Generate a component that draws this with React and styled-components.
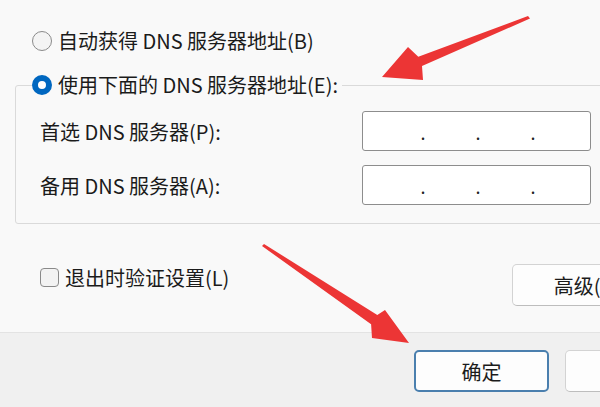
import styled, { createGlobalStyle } from "styled-components";

const Global = createGlobalStyle`
  html, body {
    margin: 0;
    padding: 0;
    background: #f9f9f9;
  }
  body {
    font-family: "Noto Sans CJK SC", "Noto Sans", sans-serif;
    color: #1b1b1b;
  }
`;

const Window = styled.div`
  position: relative;
  width: 600px;
  height: 407px;
  overflow: hidden;
  display: flex;
  flex-direction: column;
  font-size: 20px;
`;

const Main = styled.div`
  height: 333px;
  flex: 0 0 333px;
  box-sizing: border-box;
  padding-top: 30px;
  background: #f9f9f9;
  border-bottom: 1px solid #e3e3e3;
  display: flex;
  flex-direction: column;
`;

const Choice = styled.label`
  display: flex;
  align-items: center;
  gap: 6px;
  height: 22px;
  line-height: 22px;
  margin-left: ${(p) => p.$indent ?? 32}px;
  white-space: nowrap;
`;

const Radio = styled.span`
  box-sizing: border-box;
  flex: 0 0 20px;
  width: 20px;
  height: 20px;
  border-radius: 50%;
  border: ${(p) => (p.$checked ? "6px solid #0067c0" : "1.5px solid #8a8a8a")};
  background: ${(p) => (p.$checked ? "#ffffff" : "#f4f4f4")};
`;

const GroupBox = styled.div`
  margin: 33px -60px 0 15px;
  border: 1px solid #dadada;
  border-radius: 3px;
  padding: 0 0 18px 24px;
  display: flex;
  flex-direction: column;
  gap: 14px;
`;

const Legend = styled.div`
  align-self: flex-start;
  margin: -13px 0 0 -8px;
  height: 24px;
  display: flex;
  align-items: center;
  background: #f9f9f9;
  padding-right: 4px;
`;

const FieldRow = styled.div`
  display: flex;
  align-items: center;
  height: 40px;
`;

const FieldLabel = styled.span`
  flex: 0 0 322px;
  white-space: nowrap;
`;

const IpField = styled.div`
  box-sizing: border-box;
  flex: 0 0 229px;
  height: 40px;
  border: 1px solid #8d8d8d;
  border-radius: 3px;
  background: #ffffff;
  display: flex;
  align-items: center;
  padding-left: 7.5px;
`;

const Octet = styled.span`
  flex: 0 0 50px;
`;

const Dot = styled.span`
  flex: 0 0 5px;
  text-align: center;
  font-size: 18px;
  line-height: 18px;
  margin-top: 2px;
  color: #222;
`;

const OptionsRow = styled.div`
  display: flex;
  align-items: flex-start;
  margin-top: 40px;
  padding-left: 40px;
`;

const CheckLabel = styled.label`
  display: flex;
  align-items: center;
  gap: 6px;
  margin-top: 3px;
  height: 20px;
  flex: 0 0 472px;
  white-space: nowrap;
`;

const Checkbox = styled.span`
  box-sizing: border-box;
  flex: 0 0 19px;
  width: 19px;
  height: 19px;
  border: 1.5px solid #8a8a8a;
  border-radius: 4px;
  background: #f3f3f3;
`;

const Button = styled.button`
  box-sizing: border-box;
  flex: 0 0 ${(p) => p.$width}px;
  height: 42px;
  border-radius: 5px;
  font: inherit;
  color: #1b1b1b;
  background: #fdfdfd;
  border: ${(p) => (p.$primary ? "2px solid #4a7fae" : "1px solid #d3d3d3")};
  border-bottom-color: ${(p) => (p.$primary ? "#4a7fae" : "#bdbdbd")};
  white-space: nowrap;
  padding: 0;
`;

const Footer = styled.div`
  flex: 1;
  background: #f0f0f0;
  display: flex;
  align-items: flex-start;
  padding: 17px 0 0 414px;
  gap: 16px;
`;

const Overlay = styled.svg`
  position: absolute;
  left: 0;
  top: 0;
  pointer-events: none;
`;

const servers = [
  { label: "首选 DNS 服务器(P):" },
  { label: "备用 DNS 服务器(A):" },
];

function IpInput() {
  return (
    <IpField>
      <Octet />
      <Dot>.</Dot>
      <Octet />
      <Dot>.</Dot>
      <Octet />
      <Dot>.</Dot>
      <Octet />
    </IpField>
  );
}

export default function App() {
  return (
    <Window>
      <Global />
      <Main>
        <Choice>
          <Radio />
          自动获得 DNS 服务器地址(B)
        </Choice>
        <GroupBox>
          <Legend>
            <Choice $indent={0}>
              <Radio $checked />
              使用下面的 DNS 服务器地址(E):
            </Choice>
          </Legend>
          {servers.map((s) => (
            <FieldRow key={s.label}>
              <FieldLabel>{s.label}</FieldLabel>
              <IpInput />
            </FieldRow>
          ))}
        </GroupBox>
        <OptionsRow>
          <CheckLabel>
            <Checkbox />
            退出时验证设置(L)
          </CheckLabel>
          <Button $width={165}>高级(V)...</Button>
        </OptionsRow>
      </Main>
      <Footer>
        <Button $primary $width={135}>
          确定
        </Button>
        <Button $width={135} aria-label="取消" />
      </Footer>
      <Overlay width="600" height="407" viewBox="0 0 600 407">
        <polygon
          fill="#ec3535"
          points="528,16 530,18.5 422,66 423,80 382,77 408,47 418.3,56.8"
        />
        <polygon
          fill="#ec3535"
          points="262,246 264,244 377.3,315 385,310 409,343 372,338 371.1,324.2"
        />
      </Overlay>
    </Window>
  );
}
